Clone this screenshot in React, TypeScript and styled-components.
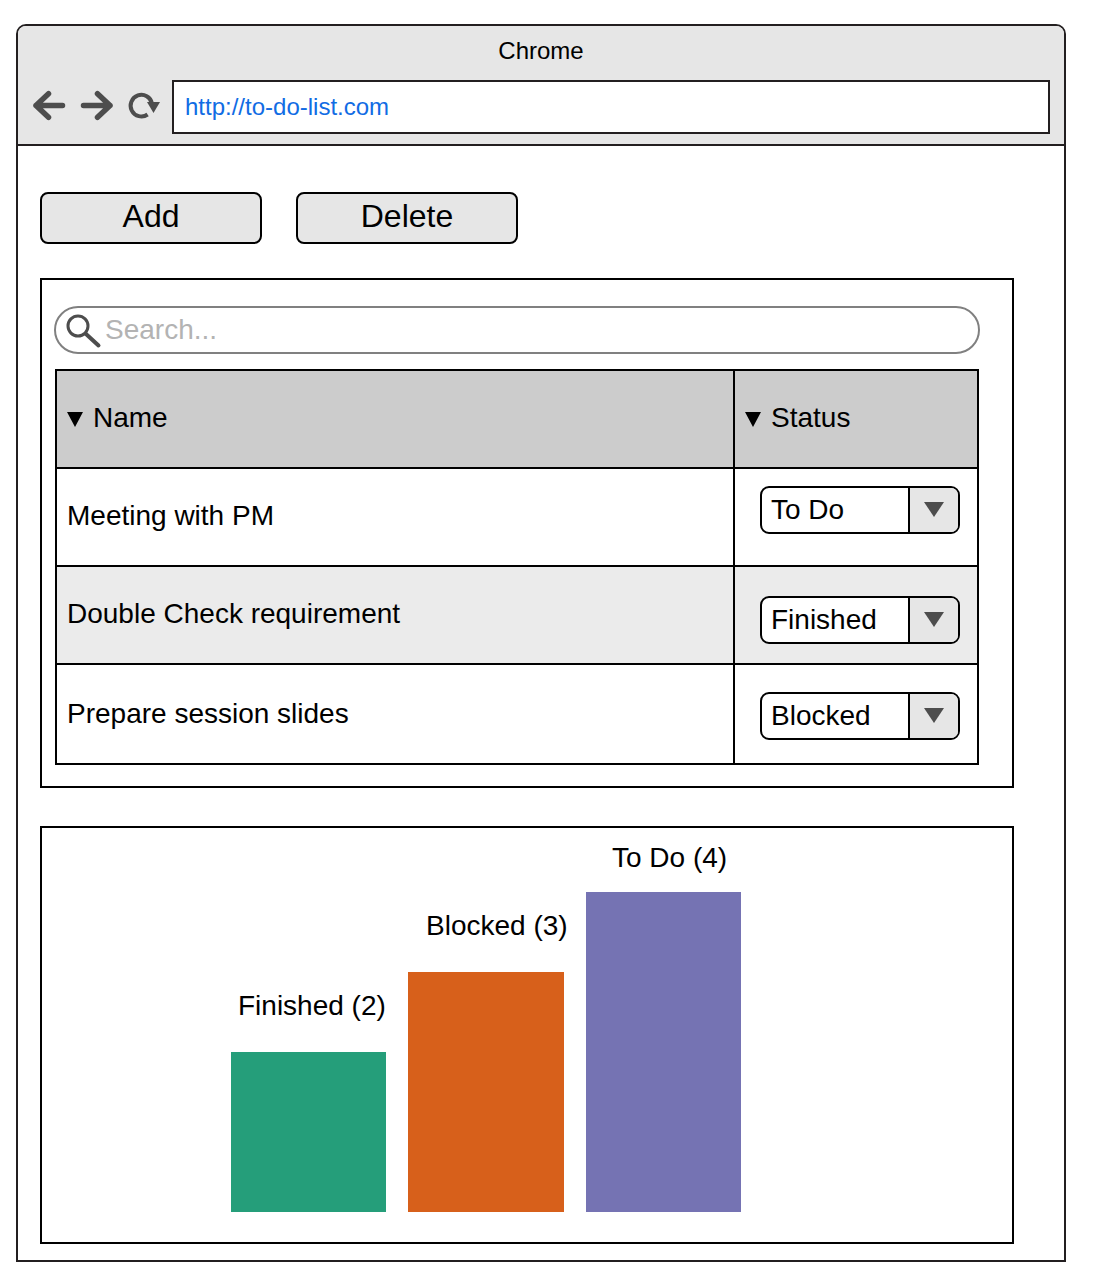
import React from 'react';
import styled, { createGlobalStyle } from 'styled-components';

const GlobalStyle = createGlobalStyle`
  html, body {
    margin: 0;
    background: #fff;
  }
  * {
    box-sizing: border-box;
  }
  body {
    font-family: "Liberation Sans", Arial, sans-serif;
    color: #000;
  }
`;

const Page = styled.div`
  width: 1096px;
  height: 1282px;
  padding: 24px 30px 20px 16px;
`;

const BrowserWindow = styled.div`
  width: 1050px;
  height: 1238px;
  border: 2px solid #231f20;
  border-radius: 10px 10px 0 0;
`;

const ChromeBar = styled.header`
  height: 120px;
  background: #e6e6e6;
  border-bottom: 2px solid #231f20;
  border-radius: 8px 8px 0 0;
`;

const WindowTitle = styled.div`
  height: 50px;
  line-height: 50px;
  text-align: center;
  font-size: 24px;
`;

const Toolbar = styled.div`
  display: flex;
  align-items: center;
  height: 54px;
  margin-top: 4px;
  padding: 0 14px 0 15px;
`;

const NavIcons = styled.svg`
  flex: none;
  width: 130px;
  height: 40px;
  margin-right: 9px;
`;

const UrlBox = styled.div`
  flex: 1;
  height: 54px;
  line-height: 50px;
  padding-left: 11px;
  background: #fff;
  border: 2px solid #231f20;
  font-size: 24px;
  color: #116ce4;
`;

const Content = styled.main`
  padding: 46px 22px 0;
`;

const ButtonRow = styled.div`
  display: flex;
  gap: 34px;
`;

const ActionButton = styled.button`
  width: 222px;
  height: 52px;
  padding: 0 0 4px;
  background: #e6e6e6;
  border: 2px solid #000;
  border-radius: 8px;
  font-family: inherit;
  font-size: 32px;
  color: #000;
`;

const Panel = styled.section`
  width: 974px;
  border: 2px solid #000;
`;

const TablePanel = styled(Panel)`
  height: 510px;
  margin-top: 34px;
  padding: 26px 0 0 12px;
`;

const ChartPanel = styled(Panel)`
  display: flex;
  align-items: flex-end;
  gap: 22px;
  height: 418px;
  margin-top: 38px;
  padding: 0 0 30px 189px;
`;

const SearchBox = styled.div`
  display: flex;
  align-items: center;
  width: 926px;
  height: 48px;
  padding-left: 10px;
  border: 2px solid #808080;
  border-radius: 24px;
`;

const SearchIcon = styled.svg`
  flex: none;
  width: 36px;
  height: 36px;
  margin: 4px 3px 0 0;
`;

const SearchPlaceholder = styled.span`
  font-size: 28px;
  color: #b3b3b3;
`;

const Table = styled.div`
  display: grid;
  grid-template-columns: 676px 244px;
  width: 924px;
  height: 396px;
  margin: 15px 0 0 1px;
  border: 2px solid #000;
`;

const Cell = styled.div<{ $tone?: 'head' | 'alt' }>`
  display: flex;
  height: 98px;
  font-size: 28px;
  border-bottom: 2px solid #000;
  background: ${(p) => (p.$tone === 'head' ? '#cccccc' : p.$tone === 'alt' ? '#ebebeb' : '#fff')};

  &:nth-last-child(-n + 2) {
    border-bottom: 0;
  }
`;

const NameCell = styled(Cell)<{ $drop?: number }>`
  align-items: center;
  padding: ${(p) => p.$drop ?? 0}px 0 2px 10px;
`;

const StatusCell = styled(Cell)`
  border-left: 2px solid #000;
  width: 244px;
`;

const HeadStatusCell = styled(StatusCell)`
  align-items: center;
  padding: 0 0 2px 10px;
`;

const SelectCell = styled(StatusCell)<{ $top: number }>`
  padding: ${(p) => p.$top}px 0 0 25px;
`;

const SortArrow = styled.span`
  width: 0;
  height: 0;
  margin: 2px 10px 0 0;
  border-left: 8.5px solid transparent;
  border-right: 8.5px solid transparent;
  border-top: 15px solid #000;
`;

const Select = styled.div`
  display: flex;
  width: 200px;
  height: 48px;
  background: #fff;
  border: 2px solid #000;
  border-radius: 9px;
  overflow: hidden;
`;

const SelectValue = styled.span`
  flex: 1;
  padding-left: 9px;
  line-height: 44px;
  font-size: 28px;
`;

const SelectArrow = styled.span`
  display: flex;
  align-items: flex-start;
  justify-content: center;
  flex: none;
  width: 50px;
  padding-top: 14px;
  background: #e6e6e6;
  border-left: 2px solid #000;

  &::after {
    content: '';
    width: 0;
    height: 0;
    border-left: 10px solid transparent;
    border-right: 10px solid transparent;
    border-top: 15px solid #4d4d4d;
  }
`;

const BarColumn = styled.div<{ $width: number }>`
  width: ${(p) => p.$width}px;
`;

const BarLabel = styled.div<{ $indent: number; $gap: number }>`
  height: 32px;
  line-height: 32px;
  margin-bottom: ${(p) => p.$gap}px;
  padding-left: ${(p) => p.$indent}px;
  font-size: 28px;
  white-space: nowrap;
`;

const Bar = styled.div<{ $color: string; $height: number }>`
  height: ${(p) => p.$height}px;
  background: ${(p) => p.$color};
`;

const rows = [
  { name: 'Meeting with PM', status: 'To Do', top: 17, drop: 0, alt: false },
  { name: 'Double Check requirement', status: 'Finished', top: 29, drop: 0, alt: true },
  { name: 'Prepare session slides', status: 'Blocked', top: 27, drop: 2, alt: false },
];

const bars = [
  { label: 'Finished (2)', color: '#259e7a', width: 155, height: 160, indent: 7, gap: 30 },
  { label: 'Blocked (3)', color: '#d7601b', width: 156, height: 240, indent: 18, gap: 30 },
  { label: 'To Do (4)', color: '#7573b3', width: 155, height: 320, indent: 26, gap: 18 },
];

const App = () => {
  return (
    <Page>
      <GlobalStyle />
      <BrowserWindow>
        <ChromeBar>
          <WindowTitle>Chrome</WindowTitle>
          <Toolbar>
            <NavIcons viewBox="0 0 130 40" aria-hidden="true">
              <g fill="none" stroke="#4d4d4d" strokeLinecap="round" strokeLinejoin="round" strokeWidth="5.5">
                <path d="M29.5 18.5H3M15.5 6.75 3 18.5 15.5 30.25" />
                <path d="M50.5 18.5H77M64.5 6.75 77 18.5 64.5 30.25" />
              </g>
              <path d="M119 16.5A10.8 10.8 0 1 0 114.6 27.5" fill="none" stroke="#4d4d4d" strokeWidth="4" />
              <path d="M114 15h13l-6.5 11z" fill="#4d4d4d" />
            </NavIcons>
            <UrlBox>http://to-do-list.com</UrlBox>
          </Toolbar>
        </ChromeBar>
        <Content>
          <ButtonRow>
            <ActionButton>Add</ActionButton>
            <ActionButton>Delete</ActionButton>
          </ButtonRow>
          <TablePanel>
            <SearchBox>
              <SearchIcon viewBox="0 0 36 36" aria-hidden="true">
                <circle cx="12" cy="12" r="10" fill="none" stroke="#4d4d4d" strokeWidth="3" />
                <path d="M20 20 32.5 31.5" fill="none" stroke="#4d4d4d" strokeWidth="4" strokeLinecap="round" />
              </SearchIcon>
              <SearchPlaceholder>Search...</SearchPlaceholder>
            </SearchBox>
            <Table>
              <NameCell $tone="head">
                <SortArrow />
                Name
              </NameCell>
              <HeadStatusCell $tone="head">
                <SortArrow />
                Status
              </HeadStatusCell>
              {rows.map((row) => (
                <React.Fragment key={row.name}>
                  <NameCell $tone={row.alt ? 'alt' : undefined} $drop={row.drop}>{row.name}</NameCell>
                  <SelectCell $tone={row.alt ? 'alt' : undefined} $top={row.top}>
                    <Select>
                      <SelectValue>{row.status}</SelectValue>
                      <SelectArrow />
                    </Select>
                  </SelectCell>
                </React.Fragment>
              ))}
            </Table>
          </TablePanel>
          <ChartPanel>
            {bars.map((bar) => (
              <BarColumn key={bar.label} $width={bar.width}>
                <BarLabel $indent={bar.indent} $gap={bar.gap}>{bar.label}</BarLabel>
                <Bar $color={bar.color} $height={bar.height} />
              </BarColumn>
            ))}
          </ChartPanel>
        </Content>
      </BrowserWindow>
    </Page>
  );
};

export default App;
